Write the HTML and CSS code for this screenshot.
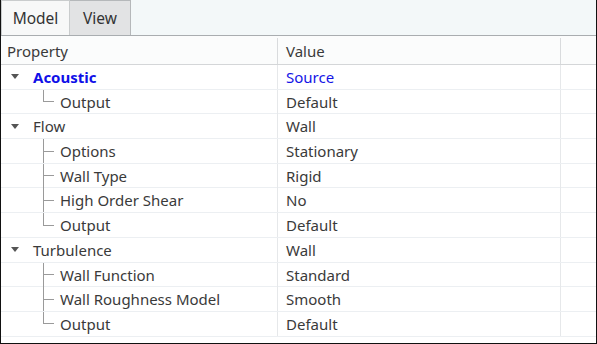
FILE: index.html
```html
<!DOCTYPE html>
<html lang="en">
<head>
    <meta charset="UTF-8">
    <title>Properties</title>
    <link rel="stylesheet" href="styles.css">
</head>

<body>
    <section class="panel">
        <nav class="tabs">
            <div class="tab">Model</div>
            <div class="tab active">View</div>
        </nav>

        <div class="grid">
            <div class="row head">
                <div class="cell prop">Property</div>
                <div class="cell val">Value</div>
                <div class="cell rest"></div>
            </div>

            <div class="row">
                <div class="cell prop group"><svg class="caret" width="8" height="5" viewBox="0 0 8 5"><path d="M0 0h8L4 5z"/></svg><span class="hot">Acoustic</span></div>
                <div class="cell val"><span class="link">Source</span></div>
                <div class="cell rest"></div>
            </div>
            <div class="row">
                <div class="cell prop child"><span class="twig last"><i></i><i></i></span>Output</div>
                <div class="cell val">Default</div>
                <div class="cell rest"></div>
            </div>

            <div class="row">
                <div class="cell prop group"><svg class="caret" width="8" height="5" viewBox="0 0 8 5"><path d="M0 0h8L4 5z"/></svg>Flow</div>
                <div class="cell val">Wall</div>
                <div class="cell rest"></div>
            </div>
            <div class="row">
                <div class="cell prop child"><span class="twig"><i></i><i></i></span>Options</div>
                <div class="cell val">Stationary</div>
                <div class="cell rest"></div>
            </div>
            <div class="row">
                <div class="cell prop child"><span class="twig"><i></i><i></i></span>Wall Type</div>
                <div class="cell val">Rigid</div>
                <div class="cell rest"></div>
            </div>
            <div class="row">
                <div class="cell prop child"><span class="twig"><i></i><i></i></span>High Order Shear</div>
                <div class="cell val">No</div>
                <div class="cell rest"></div>
            </div>
            <div class="row">
                <div class="cell prop child"><span class="twig last"><i></i><i></i></span>Output</div>
                <div class="cell val">Default</div>
                <div class="cell rest"></div>
            </div>

            <div class="row">
                <div class="cell prop group"><svg class="caret" width="8" height="5" viewBox="0 0 8 5"><path d="M0 0h8L4 5z"/></svg>Turbulence</div>
                <div class="cell val">Wall</div>
                <div class="cell rest"></div>
            </div>
            <div class="row">
                <div class="cell prop child"><span class="twig"><i></i><i></i></span>Wall Function</div>
                <div class="cell val">Standard</div>
                <div class="cell rest"></div>
            </div>
            <div class="row">
                <div class="cell prop child"><span class="twig"><i></i><i></i></span>Wall Roughness Model</div>
                <div class="cell val">Smooth</div>
                <div class="cell rest"></div>
            </div>
            <div class="row">
                <div class="cell prop child"><span class="twig last"><i></i><i></i></span>Output</div>
                <div class="cell val">Default</div>
                <div class="cell rest"></div>
            </div>
        </div>
    </section>
</body>
</html>
```

FILE: styles.css
```css
* {
    box-sizing: border-box;
}

body {
    margin: 0;
    font-family: "Noto Sans", "Open Sans", sans-serif;
    font-size: 15px;
    color: #3a3a3a;
}

.panel {
    width: 597px;
    height: 344px;
    border: 1px solid #111;
    border-top: none;
    background: #fff;
    overflow: hidden;
}

.tabs {
    display: flex;
    height: 36px;
    background: #f3f8f9;
    border-bottom: 1px solid #a9adb0;
}

.tab {
    width: 69px;
    padding-top: 6px;
    text-align: center;
    color: #333;
    font-size: 15.5px;
    background: #f7f8f8;
    border: 1px solid #c9cccd;
    border-bottom: none;
}

.tab.active {
    width: 61px;
    background: #e2e3e4;
    border-color: #b5b8ba;
    border-left: none;
}

.grid {
    display: flex;
    flex-direction: column;
}

.row {
    display: grid;
    grid-template-columns: 277px 283px 1fr;
    height: 24.7px;
    border-bottom: 1px solid #eceff2;
}

.row.head {
    height: 29px;
    padding-top: 2px;
    background: #fbfcfc;
    border-bottom: 1px solid #d4d6d8;
}

.cell {
    display: flex;
    align-items: center;
    white-space: nowrap;
    border-right: 1px solid #e6e8ea;
}

.head .cell {
    border-right-color: #d9dbdd;
}

.prop {
    padding-left: 6px;
}

.val {
    padding-left: 8px;
}

.rest {
    border-right: none;
}

.group {
    padding-left: 10px;
}

.caret {
    fill: #555;
    margin-right: 14px;
}

.hot {
    color: #1010e8;
    font-weight: bold;
}

.link {
    color: #1414e6;
}

.child {
    padding-left: 42px;
    align-items: stretch;
    line-height: 24px;
}

.twig {
    display: flex;
    flex-direction: column;
    width: 11px;
    margin-right: 6px;
}

.twig i {
    flex: 1;
    border-left: 1px solid #9a9a9a;
}

.twig i:first-child {
    border-bottom: 1px solid #9a9a9a;
}

.twig.last i:last-child {
    border-left: none;
}
```
